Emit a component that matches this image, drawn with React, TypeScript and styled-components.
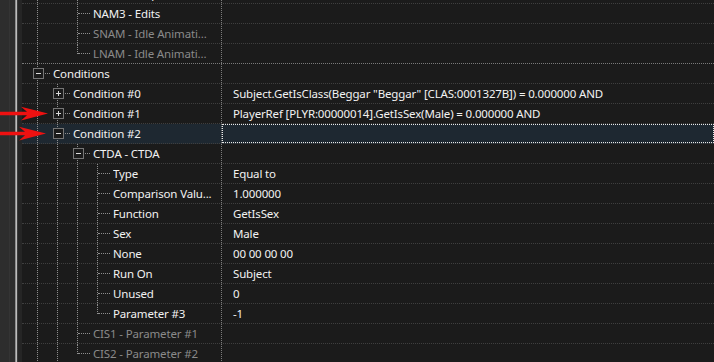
import React from 'react';
import styled, { createGlobalStyle, css } from 'styled-components';

type GuideKind = 'none' | 'line' | 'tee' | 'corner';

interface RowData {
  guides: GuideKind[];
  expander?: 'plus' | 'minus';
  label: string;
  value?: string;
  dim?: boolean;
  selected?: boolean;
  strong?: boolean;
}

const GlobalStyle = createGlobalStyle`
  html, body {
    margin: 0;
    padding: 0;
    background: #1b1b1b;
    overflow: hidden;
  }
  body {
    font-family: "Noto Sans", "Liberation Sans", sans-serif;
    font-size: 11.5px;
    letter-spacing: -0.15px;
  }
`;

const Window = styled.div`
  position: relative;
  display: flex;
  width: 714px;
  height: 362px;
  overflow: hidden;
  background: #1b1b1b;
`;

const SidePane = styled.div`
  flex: 0 0 15px;
  background: linear-gradient(to right, #2d2d2d 0 9px, #343434 9px 10px, #2d2d2d 10px 15px);
`;

const Splitter = styled.div`
  flex: 0 0 7px;
  background: linear-gradient(to right, #8c8c8c 0 1px, #bdbdbd 1px 2px, #3a3a3a 2px 3px, #252525 3px 7px);
`;

const Tree = styled.div`
  flex: 1;
  display: flex;
  flex-direction: column;
  margin-top: -16px;
  color: #f2f2f2;
`;

const Row = styled.div<{ $selected?: boolean; $strong?: boolean }>`
  display: flex;
  flex: 0 0 20px;
  box-sizing: border-box;
  border-bottom: 1px dotted ${p => (p.$strong ? '#7a7a7a' : '#3f3f3f')};
  background: ${p => (p.$selected ? '#1e2831' : 'transparent')};
`;

const NameCell = styled.div`
  flex: 0 0 200px;
  box-sizing: border-box;
  display: flex;
  padding-left: 6px;
  border-right: 1px dotted #7c7c7c;
  overflow: hidden;
`;

const lineColor = '#8e8e8e';

const Guide = styled.div<{ $kind: GuideKind }>`
  position: relative;
  flex: 0 0 20px;
  display: flex;
  align-items: center;
  padding-left: 5px;
  box-sizing: border-box;

  ${p =>
    p.$kind !== 'none' &&
    css`
      &::before {
        content: '';
        position: absolute;
        left: 9px;
        top: 0;
        height: ${p.$kind === 'corner' ? '10px' : '100%'};
        border-left: 1px dotted ${lineColor};
      }
    `}

  ${p =>
    (p.$kind === 'tee' || p.$kind === 'corner') &&
    css`
      &::after {
        content: '';
        position: absolute;
        left: 10px;
        top: 9px;
        width: 12px;
        border-top: 1px dotted ${lineColor};
      }
    `}
`;

const Expander = styled.div<{ $open: boolean }>`
  position: relative;
  z-index: 1;
  width: 11px;
  height: 11px;
  box-sizing: border-box;
  border: 1px solid #767676;
  background: #1b1b1b;

  &::before {
    content: '';
    position: absolute;
    left: 2px;
    top: 4px;
    width: 5px;
    height: 1px;
    background: #dadada;
  }

  ${p =>
    !p.$open &&
    css`
      &::after {
        content: '';
        position: absolute;
        left: 4px;
        top: 2px;
        width: 1px;
        height: 5px;
        background: #dadada;
      }
    `}
`;

const Label = styled.span<{ $dim?: boolean }>`
  flex: 1;
  min-width: 0;
  margin-left: 5px;
  line-height: 19px;
  white-space: nowrap;
  overflow: hidden;
  color: ${p => (p.$dim ? '#8a8a8a' : '#f2f2f2')};
`;

const ValueCell = styled.div<{ $focused?: boolean }>`
  flex: 1;
  box-sizing: border-box;
  padding-left: 11px;
  line-height: 19px;
  white-space: nowrap;
  overflow: hidden;
  color: #f2f2f2;
  ${p =>
    p.$focused &&
    css`
      border: 1px dotted #e8e8e8;
      padding-left: 10px;
      line-height: 17px;
    `}
`;

const ArrowMark = styled.svg<{ $top: number }>`
  position: absolute;
  left: 0;
  top: ${p => p.$top}px;
  width: 50px;
  height: 16px;
  pointer-events: none;
`;

const rows: RowData[] = [
  { guides: ['line', 'none', 'tee'], label: 'NAM2 - Step' },
  { guides: ['line', 'none', 'tee'], label: 'NAM3 - Edits' },
  { guides: ['line', 'none', 'tee'], label: 'SNAM - Idle Animati...', dim: true },
  { guides: ['line', 'none', 'corner'], label: 'LNAM - Idle Animati...', dim: true, strong: true },
  { guides: ['tee'], expander: 'minus', label: 'Conditions' },
  {
    guides: ['line', 'tee'],
    expander: 'plus',
    label: 'Condition #0',
    value: 'Subject.GetIsClass(Beggar "Beggar" [CLAS:0001327B]) = 0.000000 AND',
  },
  {
    guides: ['line', 'tee'],
    expander: 'plus',
    label: 'Condition #1',
    value: 'PlayerRef [PLYR:00000014].GetIsSex(Male) = 0.000000 AND',
  },
  { guides: ['line', 'tee'], expander: 'minus', label: 'Condition #2', selected: true },
  { guides: ['line', 'line', 'tee'], expander: 'minus', label: 'CTDA - CTDA' },
  { guides: ['line', 'line', 'line', 'tee'], label: 'Type', value: 'Equal to' },
  { guides: ['line', 'line', 'line', 'tee'], label: 'Comparison Valu...', value: '1.000000' },
  { guides: ['line', 'line', 'line', 'tee'], label: 'Function', value: 'GetIsSex' },
  { guides: ['line', 'line', 'line', 'tee'], label: 'Sex', value: 'Male' },
  { guides: ['line', 'line', 'line', 'tee'], label: 'None', value: '00 00 00 00' },
  { guides: ['line', 'line', 'line', 'tee'], label: 'Run On', value: 'Subject' },
  { guides: ['line', 'line', 'line', 'tee'], label: 'Unused', value: '0' },
  { guides: ['line', 'line', 'line', 'corner'], label: 'Parameter #3', value: '-1' },
  { guides: ['line', 'line', 'tee'], label: 'CIS1 - Parameter #1', dim: true },
  { guides: ['line', 'line', 'corner'], label: 'CIS2 - Parameter #2', dim: true },
];

function Arrow({ top, tip }: { top: number; tip: number }) {
  const back = tip - 27;
  return (
    <ArrowMark $top={top} viewBox="0 0 50 16">
      <polygon
        fill="#ee1111"
        points={`0,5.8 ${back + 6},5.8 ${back},0.8 ${tip},7.5 ${back},14.6 ${back + 6},9.3 0,9.3`}
      />
    </ArrowMark>
  );
}

export default function App() {
  return (
    <>
      <GlobalStyle />
      <Window>
        <SidePane />
        <Splitter />
        <Tree>
          {rows.map((r, i) => (
            <Row key={i} $selected={r.selected} $strong={r.strong}>
              <NameCell>
                {r.guides.map((g, gi) => (
                  <Guide key={gi} $kind={g}>
                    {gi === r.guides.length - 1 && r.expander && (
                      <Expander $open={r.expander === 'minus'} />
                    )}
                  </Guide>
                ))}
                <Label $dim={r.dim}>{r.label}</Label>
              </NameCell>
              <ValueCell $focused={r.selected}>{r.value}</ValueCell>
            </Row>
          ))}
        </Tree>
        <Arrow top={106} tip={48} />
        <Arrow top={126} tip={46} />
      </Window>
    </>
  );
}
